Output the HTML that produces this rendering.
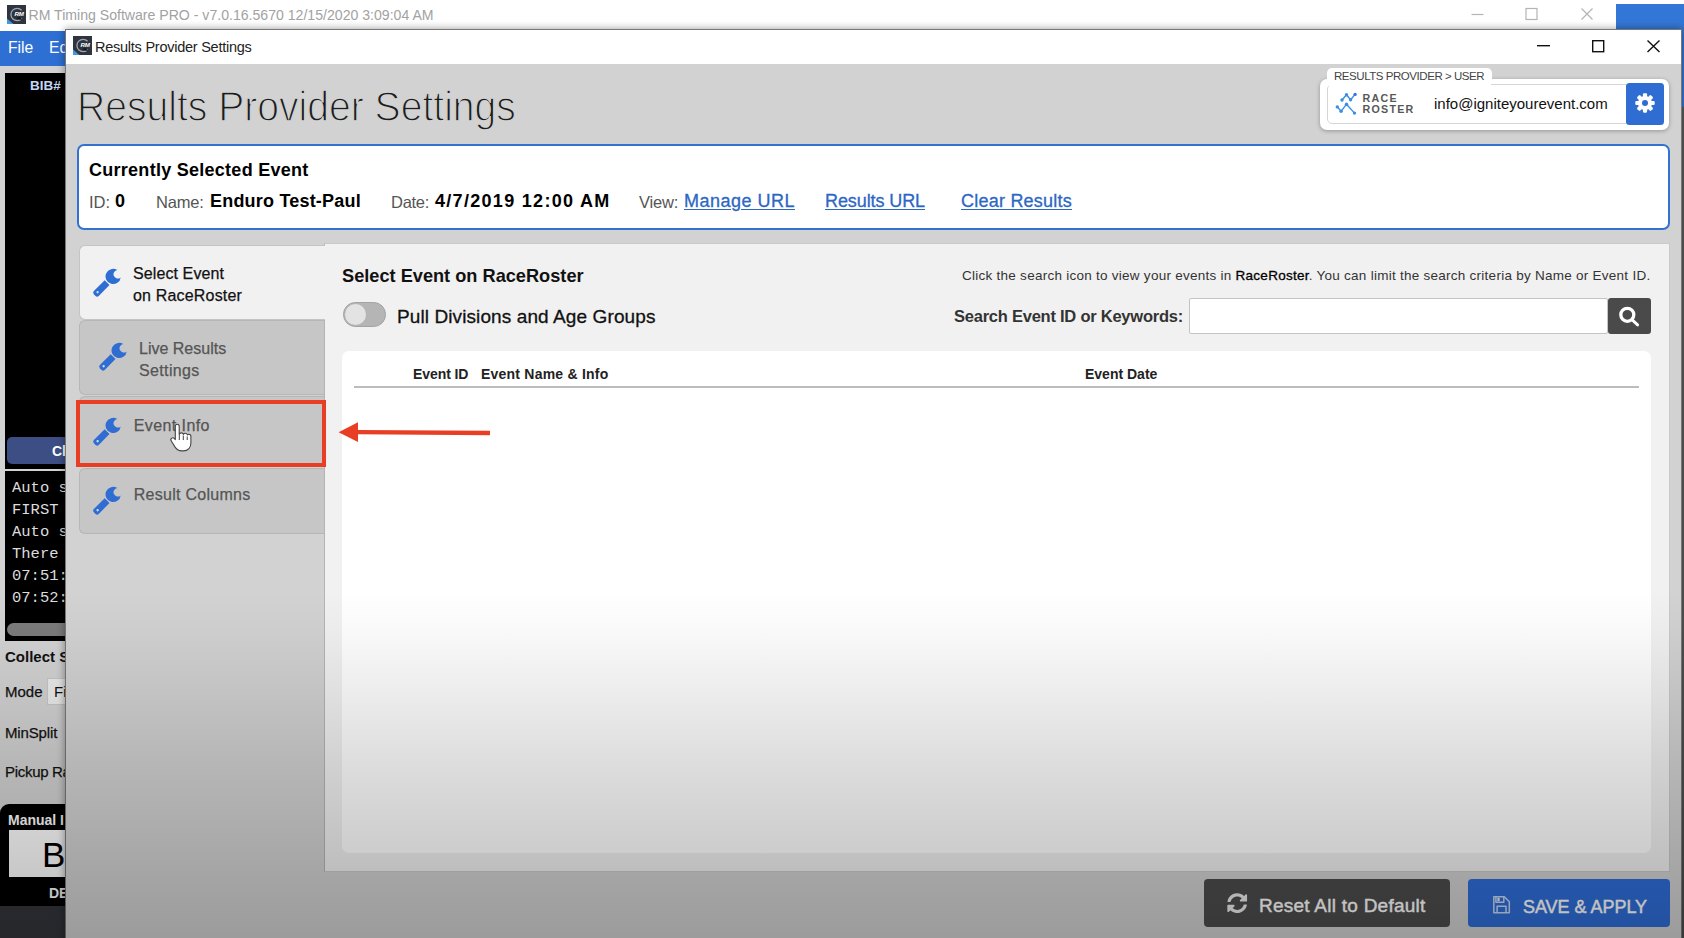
<!DOCTYPE html>
<html>
<head>
<meta charset="utf-8">
<title>Results Provider Settings</title>
<style>
*{box-sizing:border-box;margin:0;padding:0}
html,body{width:1684px;height:938px;overflow:hidden;background:#d0d0d0;font-family:"Liberation Sans",sans-serif;}
.abs{position:absolute}
#root{position:absolute;left:0;top:0;width:1684px;height:938px;overflow:hidden;background:#d2d2d2}
.t{position:absolute;white-space:nowrap;line-height:1;color:#000}
.b{font-weight:bold}
/* ---------- main (background) window ---------- */
#mw-title{left:0;top:0;width:1616px;height:31px;background:#fff}
#mw-title2{left:1616px;top:0;width:68px;height:5px;background:#fff}
#mw-blue{left:1616px;top:4px;width:68px;height:103px;background:#3377d6}
#mw-right{left:1680px;top:107px;width:4px;height:840px;background:#5c5c5c}
#mw-menu{left:0;top:31px;width:70px;height:35px;background:#2d6fd3}
#mw-body{left:0;top:66px;width:70px;height:872px;background:#d3d3d3}
.mono{font-family:"Liberation Mono",monospace;font-size:15.5px;color:#dcdcdc}
/* ---------- dialog ---------- */
#dlg{left:65px;top:29px;width:1617px;height:920px;background:#d2d2d2;border:1px solid #777;box-shadow:0 0 8px rgba(0,0,0,.4)}
#ov{left:0;top:590px;width:1684px;height:348px;z-index:20;background:linear-gradient(to bottom,rgba(0,0,0,0) 0%,rgba(0,0,0,.025) 12%,rgba(0,0,0,.075) 30%,rgba(0,0,0,.135) 50%,rgba(0,0,0,.185) 70%,rgba(0,0,0,.225) 85%,rgba(0,0,0,.26) 100%)}
#dlg-title{left:0;top:0;width:1615px;height:33.5px;background:#fff}
.lnk{font-size:18px;color:#2c67c4;text-decoration:underline;text-underline-offset:2px;-webkit-text-stroke:.3px #2c67c4}
</style>
</head>
<body>
<div id="root">

<!-- main window behind -->
<div id="mw-title" class="abs"></div>
<div id="mw-title2" class="abs"></div>
<div id="mw-blue" class="abs"></div>
<div id="mw-right" class="abs"></div>
<div id="mw-menu" class="abs"></div>
<div id="mw-body" class="abs"></div>

<!-- main window title -->
<svg class="abs" style="left:6.500px;top:4.800px" width="19" height="19" viewBox="0 0 19 19"><rect width="19" height="19" fill="#2e3440"/><path d="M0 19V13.5L6.500 19Z" fill="#3f9be0"/><path d="M14.600 5.200A6.200 6.200 0 1 0 14.800 13.600" fill="none" stroke="#a4a6aa" stroke-width="1.300"/><path d="M9 13.200L15.500 15.500L12.500 11.800Z" fill="#15181e"/><text x="7.400" y="11.300" font-family="Liberation Sans" font-weight="bold" font-style="italic" font-size="6.200" fill="#fff">RM</text></svg>
<div class="t" style="left:28.500px;top:8px;font-size:14.1px;color:#a2a2a2">RM Timing Software PRO - v7.0.16.5670 12/15/2020 3:09:04 AM</div>
<svg class="abs" style="left:1460px;top:0" width="150" height="30" viewBox="0 0 150 30"><g stroke="#b4b4b4" stroke-width="1.2" fill="none"><path d="M11.5 14.5H23.5"/><rect x="66" y="8.5" width="11" height="11"/><path d="M121.5 8.5L132.5 19.5M132.5 8.5L121.5 19.5"/></g></svg>
<!-- menu -->
<div class="t" style="left:8px;top:40px;font-size:15.7px;color:#fff">File</div>
<div class="t" style="left:49px;top:40px;font-size:15.7px;color:#fff">Ed</div>
<!-- black bib panel -->
<div class="abs" style="left:5px;top:73px;width:70px;height:396px;background:#000"></div>
<div class="t b" style="left:30px;top:79px;font-size:13.5px;color:#c3d6f4">BIB#</div>
<div class="abs" style="left:7px;top:437px;width:70px;height:27px;background:#3d4e84;border-radius:5px"></div>
<div class="t b" style="left:52px;top:444px;font-size:14px;color:#fff">Cl</div>
<!-- log panel -->
<div class="abs" style="left:5px;top:471px;width:70px;height:170px;background:#000"></div>
<div class="t mono" style="left:12px;top:480.5px">Auto s</div>
<div class="t mono" style="left:12px;top:502.5px">FIRST </div>
<div class="t mono" style="left:12px;top:524.5px">Auto s</div>
<div class="t mono" style="left:12px;top:546.5px">There </div>
<div class="t mono" style="left:12px;top:568.5px">07:51:</div>
<div class="t mono" style="left:12px;top:590.5px">07:52:</div>
<div class="abs" style="left:7px;top:623px;width:70px;height:13px;background:#7c7c7c;border-radius:7px"></div>
<!-- collect settings -->
<div class="t b" style="left:5px;top:649px;font-size:15px;color:#111">Collect S</div>
<div class="t" style="left:5px;top:684px;font-size:15px;color:#111;-webkit-text-stroke:.25px #111">Mode</div>
<div class="abs" style="left:47px;top:678px;width:30px;height:27px;background:#ececec;border:1px solid #c8c8c8"></div>
<div class="t" style="left:54px;top:684px;font-size:15px;color:#111">Fi</div>
<div class="t" style="left:5px;top:725px;font-size:15px;letter-spacing:-0.15px;color:#111;-webkit-text-stroke:.25px #111">MinSplit</div>
<div class="t" style="left:5px;top:764px;font-size:15px;letter-spacing:-0.3px;color:#111;-webkit-text-stroke:.25px #111">Pickup Ra</div>
<!-- manual panel -->
<div class="abs" style="left:0;top:804px;width:80px;height:102px;background:#000;border-radius:9px 0 0 0"></div>
<div class="abs" style="left:0;top:906px;width:80px;height:32px;background:#34353b"></div>
<div class="t b" style="left:8px;top:813px;font-size:14px;color:#fff">Manual I</div>
<div class="abs" style="left:9px;top:830px;width:70px;height:46.5px;background:#fff"></div>
<div class="t" style="left:42px;top:837px;font-size:35px;color:#000">B</div>
<div class="t b" style="left:49px;top:886px;font-size:14px;color:#fff">DE</div>


<!-- dialog -->
<div id="dlg" class="abs">
  <div id="dlg-title" class="abs"></div>

<div class="abs" id="dz" style="left:-66px;top:-30px;width:1684px;height:938px">
<!-- title bar -->
<svg class="abs" style="left:73px;top:36.2px" width="19" height="19" viewBox="0 0 19 19"><rect width="19" height="19" fill="#2e3440"/><path d="M0 19V13.5L6.500 19Z" fill="#3f9be0"/><path d="M14.600 5.200A6.200 6.200 0 1 0 14.800 13.600" fill="none" stroke="#a4a6aa" stroke-width="1.300"/><path d="M9 13.200L15.500 15.500L12.500 11.800Z" fill="#15181e"/><text x="7.400" y="11.300" font-family="Liberation Sans" font-weight="bold" font-style="italic" font-size="6.200" fill="#fff">RM</text></svg>
<div class="t" style="left:95px;top:40px;font-size:14.5px;letter-spacing:-0.25px;color:#222">Results Provider Settings</div>
<svg class="abs" style="left:1520px;top:30px" width="160" height="33" viewBox="0 0 160 33"><g stroke="#111" stroke-width="1.4" fill="none"><path d="M17 15.7H30"/><rect x="72.7" y="10.7" width="11" height="11"/><path d="M127.5 10.5L139.5 22M139.5 10.5L127.5 22"/></g></svg>

<!-- heading -->
<div class="t" id="h1" style="left:77px;top:85px;font-size:43px;color:#1c1c1c;-webkit-text-stroke:1.4px #d2d2d2;transform-origin:0 0;transform:scaleX(.909)">Results Provider Settings</div>

<!-- provider box -->
<div class="abs" style="left:1320px;top:78.5px;width:349px;height:51.5px;background:#fff;border-radius:7px;box-shadow:0 1px 4px rgba(0,0,0,.3)"></div>
<div class="abs" style="left:1327px;top:68px;width:165px;height:20px;background:#fff;border-radius:5px 5px 0 0"></div>
<div class="abs" style="left:1327px;top:84px;width:300px;height:40px;border:1px solid #d6d6d6;border-radius:5px 0 0 5px;background:#fff"></div>
<div class="abs" style="left:1328px;top:70px;width:163px;height:16px;background:#fff"></div>
<div class="t" style="left:1334px;top:71px;font-size:11.5px;color:#444;letter-spacing:-0.45px">RESULTS PROVIDER &gt; USER</div>
<div class="abs" style="left:1625.5px;top:82.5px;width:38.5px;height:42px;background:#2f6dd3;border-radius:3.5px"></div>
<svg class="abs" style="left:1632.9px;top:91.1px" width="24" height="24" viewBox="-12 -12 24 24"><g fill="#fff"><rect x="-2.1" y="-9.700" width="4.2" height="5" rx="1.1" transform="rotate(0)"/><rect x="-2.1" y="-9.700" width="4.2" height="5" rx="1.1" transform="rotate(45)"/><rect x="-2.1" y="-9.700" width="4.2" height="5" rx="1.1" transform="rotate(90)"/><rect x="-2.1" y="-9.700" width="4.2" height="5" rx="1.1" transform="rotate(135)"/><rect x="-2.1" y="-9.700" width="4.2" height="5" rx="1.1" transform="rotate(180)"/><rect x="-2.1" y="-9.700" width="4.2" height="5" rx="1.1" transform="rotate(225)"/><rect x="-2.1" y="-9.700" width="4.2" height="5" rx="1.1" transform="rotate(270)"/><rect x="-2.1" y="-9.700" width="4.2" height="5" rx="1.1" transform="rotate(315)"/><circle r="7"/></g><circle r="3" fill="#2f6dd3"/></svg>
<svg class="abs" style="left:1334px;top:91px" width="25" height="25" viewBox="0 0 25 25"><g fill="none" stroke="#3a8ee2" stroke-width="1.4" stroke-linejoin="round" stroke-linecap="round"><path d="M8 9L12.5 3.700L16.600 8.700L21.100 3.400"/><path d="M3.300 15.900L7.100 20.300L12.500 13.200L20.500 22.100"/></g><g fill="#3a8ee2"><circle cx="8" cy="9" r="1.7"/><circle cx="12.500" cy="3.700" r="1.7"/><circle cx="16.600" cy="8.700" r="1.7"/><circle cx="21.100" cy="3.400" r="1.7" fill="#3a74d8"/><circle cx="3.300" cy="15.900" r="1.7"/><circle cx="7.100" cy="20.300" r="1.7"/><circle cx="12.500" cy="13.200" r="1.7"/><circle cx="20.500" cy="22.100" r="1.7"/></g></svg>
<div class="t b" style="left:1362.5px;top:92.5px;font-size:10.7px;letter-spacing:1.3px;color:#585858">RACE</div>
<div class="t b" style="left:1362.5px;top:103.8px;font-size:10.7px;letter-spacing:1.24px;color:#585858">ROSTER</div>
<div class="t" style="left:1434px;top:96px;font-size:15px;color:#111">info@igniteyourevent.com</div>

<!-- currently selected event -->
<div class="abs" style="left:77px;top:144px;width:1593px;height:86px;background:#fff;border:2px solid #3273d1;border-radius:7px"></div>
<div class="t b" style="left:89px;top:161px;font-size:18px;letter-spacing:0.27px">Currently Selected Event</div>
<div class="t" style="left:89px;top:194px;font-size:16.5px;color:#555">ID:</div>
<div class="t b" style="left:115px;top:192px;font-size:18px">0</div>
<div class="t" style="left:156px;top:194px;font-size:16.5px;color:#555;letter-spacing:-0.18px">Name:</div>
<div class="t b" style="left:210px;top:192px;font-size:18px;letter-spacing:0.2px">Enduro Test-Paul</div>
<div class="t" style="left:391px;top:194px;font-size:16.5px;color:#555;letter-spacing:-0.28px">Date:</div>
<div class="t b" style="left:435px;top:192px;font-size:18px;letter-spacing:1.3px">4/7/2019 12:00 AM</div>
<div class="t" style="left:639px;top:194px;font-size:16.5px;color:#555;letter-spacing:-0.17px">View:</div>
<div class="t lnk" style="left:684px;top:192px;letter-spacing:0.49px">Manage URL</div>
<div class="t lnk" style="left:825px;top:192px;letter-spacing:-0.09px">Results URL</div>
<div class="t lnk" style="left:961px;top:192px;letter-spacing:0.23px">Clear Results</div>

<!-- content panel -->
<div class="abs" style="left:324px;top:243px;width:1346px;height:629px;background:#f1f1f1;border:1px solid #c9c9c9;border-left:1px solid #b4b4b4"></div>
<!-- side tabs -->
<div class="abs" style="left:79px;top:245px;width:246px;height:75px;background:#f1f1f1;border:1px solid #c4c4c4;border-right:none;border-radius:6px 0 0 6px"></div>
<div class="abs" style="left:79px;top:320px;width:245px;height:75px;background:#c6c6c6;border:1px solid #b6b6b6;border-right:none;border-radius:6px 0 0 6px"></div>
<div class="abs" style="left:79px;top:396px;width:245px;height:71px;background:#c6c6c6;border:1px solid #b6b6b6;border-right:none;border-radius:6px 0 0 6px"></div>
<div class="abs" style="left:79px;top:468px;width:245px;height:66px;background:#c6c6c6;border:1px solid #b6b6b6;border-right:none;border-radius:6px 0 0 6px"></div>
<svg class="abs" style="left:92px;top:268px" width="30" height="30" viewBox="0 0 30 30"><path fill="#2f6dd3" d="M25.3 2.1A7.6 7.6 0 1 0 28.7 9.4A4.25 4.25 0 1 1 25.3 2.1Z"/><g transform="translate(15.1,14.7) rotate(45)"><path fill="#2f6dd3" d="M-3.4 0H3.4V15.3a2.2 2.2 0 0 1-2.2 2.2H-1.2a2.2 2.2 0 0 1-2.2-2.2Z"/><circle cx="0" cy="13.4" r="1.15" fill="#cfe0f8"/></g></svg>
<svg class="abs" style="left:98px;top:342px" width="30" height="30" viewBox="0 0 30 30"><path fill="#2f6dd3" d="M25.3 2.1A7.6 7.6 0 1 0 28.7 9.4A4.25 4.25 0 1 1 25.3 2.1Z"/><g transform="translate(15.1,14.7) rotate(45)"><path fill="#2f6dd3" d="M-3.4 0H3.4V15.3a2.2 2.2 0 0 1-2.2 2.2H-1.2a2.2 2.2 0 0 1-2.2-2.2Z"/><circle cx="0" cy="13.4" r="1.15" fill="#cfe0f8"/></g></svg>
<svg class="abs" style="left:92px;top:416.5px" width="30" height="30" viewBox="0 0 30 30"><path fill="#2f6dd3" d="M25.3 2.1A7.6 7.6 0 1 0 28.7 9.4A4.25 4.25 0 1 1 25.3 2.1Z"/><g transform="translate(15.1,14.7) rotate(45)"><path fill="#2f6dd3" d="M-3.4 0H3.4V15.3a2.2 2.2 0 0 1-2.2 2.2H-1.2a2.2 2.2 0 0 1-2.2-2.2Z"/><circle cx="0" cy="13.4" r="1.15" fill="#cfe0f8"/></g></svg>
<svg class="abs" style="left:92px;top:485.5px" width="30" height="30" viewBox="0 0 30 30"><path fill="#2f6dd3" d="M25.3 2.1A7.6 7.6 0 1 0 28.7 9.4A4.25 4.25 0 1 1 25.3 2.1Z"/><g transform="translate(15.1,14.7) rotate(45)"><path fill="#2f6dd3" d="M-3.4 0H3.4V15.3a2.2 2.2 0 0 1-2.2 2.2H-1.2a2.2 2.2 0 0 1-2.2-2.2Z"/><circle cx="0" cy="13.4" r="1.15" fill="#cfe0f8"/></g></svg>
<div class="t" style="left:133px;top:265.5px;font-size:16px;letter-spacing:0.1px;color:#111;-webkit-text-stroke:.25px #111">Select Event</div>
<div class="t" style="left:133px;top:287.5px;font-size:16px;letter-spacing:0.18px;color:#111;-webkit-text-stroke:.25px #111">on RaceRoster</div>
<div class="t" style="left:139px;top:340.5px;font-size:16px;color:#555;-webkit-text-stroke:.25px #555">Live Results</div>
<div class="t" style="left:139px;top:362.5px;font-size:16px;letter-spacing:0.36px;color:#555;-webkit-text-stroke:.25px #555">Settings</div>
<div class="t" style="left:133.7px;top:418px;font-size:16px;letter-spacing:0.42px;color:#555;-webkit-text-stroke:.25px #555">Event Info</div>
<div class="t" style="left:133.7px;top:487px;font-size:16px;letter-spacing:0.28px;color:#555;-webkit-text-stroke:.25px #555">Result Columns</div>
<!-- red highlight -->
<div class="abs" style="left:76px;top:400px;width:250px;height:67px;border:4px solid #e83e23"></div>
<svg class="abs" style="left:336px;top:420px;z-index:5" width="160" height="24" viewBox="0 0 160 24"><path d="M2.600 12.200L22 2.300V22Z" fill="#e83e23"/><path d="M21 12.200L154 13" stroke="#e83e23" stroke-width="4.300"/></svg>
<svg class="abs" style="left:169px;top:422px;z-index:6" width="24" height="32" viewBox="0 0 24 32"><path d="M8.2 2.2c1.200 0 2 .9 2 2.100v8.200l.2-.1c.3-1 1.100-1.500 2-1.500 1 0 1.800.6 2 1.500.4-.7 1.100-1.100 1.900-1.100 1.100 0 1.900.7 2.100 1.700.3-.4.900-.7 1.500-.7 1.200 0 2 .9 2 2.100v6.400c0 4.600-2.800 8.100-7.600 8.100h-1.500c-3 0-5.100-1.400-6.700-3.800L2.300 19c-.7-1.100-.5-2.300.4-2.900.9-.6 2-.4 2.800.5l.8 1V4.300c0-1.200.8-2.100 1.900-2.100z" fill="#fff" stroke="#444" stroke-width="1.1" stroke-linejoin="round"/><path d="M10.300 13v5M14.300 13.500v4.500M18.200 14.500v3.500" stroke="#444" stroke-width="1" fill="none"/></svg>

<!-- panel content -->
<div class="t b" style="left:342px;top:267px;font-size:18.2px;color:#111">Select Event on RaceRoster</div>
<div class="abs" style="left:342.7px;top:302px;width:43.6px;height:24.6px;border-radius:12.3px;background:#b5b5b5;border:1.8px solid #a3a3a3"></div>
<div class="abs" style="left:344.8px;top:303.8px;width:21px;height:21px;border-radius:10.5px;background:#e3e3e3"></div>
<div class="t" style="left:397px;top:307px;font-size:19px;letter-spacing:0.1px;color:#111;-webkit-text-stroke:.3px #111">Pull Divisions and Age Groups</div>
<div class="t" style="left:962px;top:269px;font-size:13.5px;letter-spacing:0.26px;color:#333">Click the search icon to view your events in <span style="color:#000;-webkit-text-stroke:0.3px #000">RaceRoster</span>. You can limit the search criteria by Name or Event ID.</div>
<div class="t b" style="left:954px;top:308px;font-size:16.5px;letter-spacing:-0.24px;color:#333">Search Event ID or Keywords:</div>
<div class="abs" style="left:1189px;top:298px;width:419px;height:35.5px;background:#fff;border:1px solid #c4c4c4;border-radius:2px"></div>
<div class="abs" style="left:1607.5px;top:298px;width:43px;height:35.5px;background:#4a4a4a;border-radius:3px"></div>
<svg class="abs" style="left:1618px;top:305px" width="22" height="22" viewBox="0 0 22 22"><circle cx="9.3" cy="9.800" r="6.5" fill="none" stroke="#fff" stroke-width="3.3"/><path d="M14.2 14.9L19.600 19.900" stroke="#fff" stroke-width="2.9" stroke-linecap="round"/></svg>
<!-- table -->
<div class="abs" style="left:341.6px;top:351px;width:1309px;height:502px;background:#fff;border-radius:7px"></div>
<div class="t b" style="left:413px;top:367px;font-size:14px;letter-spacing:-0.08px;color:#222">Event ID</div>
<div class="t b" style="left:481px;top:367px;font-size:14px;letter-spacing:0.22px;color:#222">Event Name &amp; Info</div>
<div class="t b" style="left:1085px;top:367px;font-size:14px;color:#222">Event Date</div>
<div class="abs" style="left:354px;top:386px;width:1285px;height:1.6px;background:#bcbcbc"></div>

<!-- bottom buttons -->
<div class="abs" style="left:1204px;top:879px;width:246px;height:48px;background:#4c4c4c;border-radius:4px"></div>
<svg class="abs" style="left:1227.3px;top:893px" width="20.4" height="20.4" viewBox="0 0 512 512"><path fill="#ececec" d="M370.72 133.280C339.458 104.008 298.888 87.962 255.848 88c-77.458.068-144.328 53.178-162.791 126.850-1.344 5.363-6.122 9.150-11.651 9.150H24.103c-7.498 0-13.194-6.807-11.807-14.176C33.933 94.924 134.813 8 256 8c66.448 0 126.791 26.136 171.315 68.685L463.030 40.970C478.149 25.851 504 36.559 504 57.941V192c0 13.255-10.745 24-24 24H345.941c-21.382 0-32.090-25.851-16.971-40.971l41.750-41.749zM32 296h134.059c21.382 0 32.090 25.851 16.971 40.971l-41.750 41.750c31.262 29.273 71.835 45.319 114.876 45.280 77.418-.07 144.315-53.144 162.787-126.849 1.344-5.363 6.122-9.150 11.651-9.150h57.304c7.498 0 13.194 6.807 11.807 14.176C478.067 417.076 377.187 504 256 504c-66.448 0-126.791-26.136-171.315-68.685L48.970 471.030C33.851 486.149 8 475.441 8 454.059V320c0-13.255 10.745-24 24-24z"/></svg>
<div class="t" style="left:1259px;top:896px;font-size:19px;letter-spacing:0.25px;color:#fff;-webkit-text-stroke:.4px #fff">Reset All to Default</div>
<div class="abs" style="left:1468px;top:879px;width:202px;height:48px;background:#2f6dd8;border-radius:4px"></div>
<svg class="abs" style="left:1493px;top:895.7px" width="18" height="18" viewBox="0 0 18 18"><g fill="none" stroke="#c6d8f4" stroke-width="1.5" stroke-linejoin="round"><path d="M0.800 0.800H11.300L16.300 5.800V16.700H0.800Z"/><path d="M2.900 0.800V6.300H10.800V0.800"/><path d="M4.100 16.700V10.300H13V16.700"/></g><rect x="4.300" y="1.700" width="2.400" height="3.500" fill="#dfe9f9"/></svg>
<div class="t" style="left:1522.6px;top:896.8px;font-size:19px;color:#fff;-webkit-text-stroke:.45px #fff;transform-origin:0 0;transform:scaleX(.945)">SAVE &amp; APPLY</div>

</div>

</div>

<!-- overlay gradient -->
<div id="ov" class="abs"></div>
</div>
</body>
</html>
